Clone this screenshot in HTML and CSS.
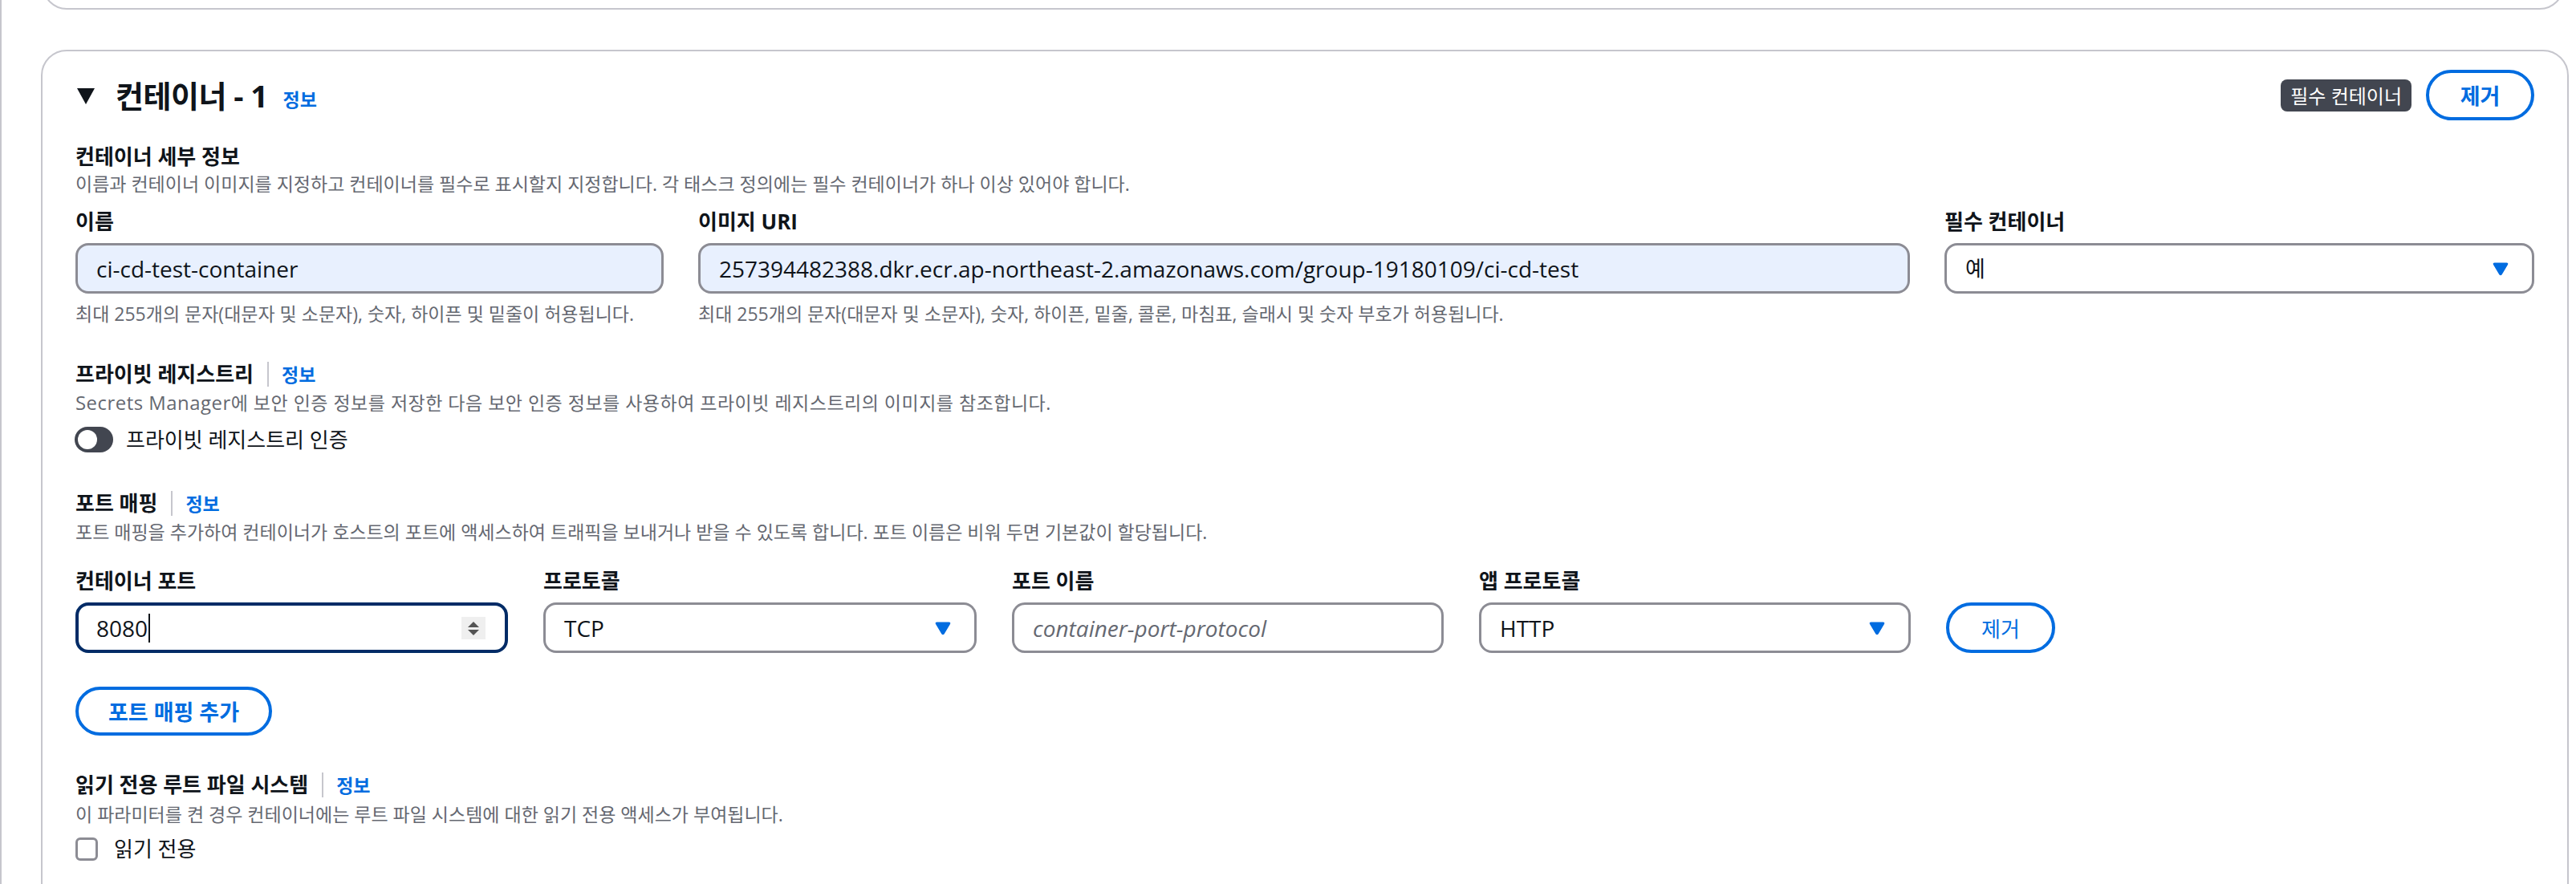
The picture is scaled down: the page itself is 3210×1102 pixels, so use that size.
FILE: index.html
```html
<!DOCTYPE html>
<html lang="ko">
<head>
<meta charset="utf-8">
<title>컨테이너 - 1</title>
<link rel="stylesheet" href="styles.css">
</head>
<body>
<div class="page">
  <div class="prev-card"></div>

  <section class="card">
    <header class="card-header">
      <div class="title-group">
        <span class="caret-down"></span>
        <h2 class="title">컨테이너 - 1</h2>
        <a class="info-link title-info">정보</a>
      </div>
      <div class="header-actions">
        <span class="badge">필수 컨테이너</span>
        <button class="btn btn-header">제거</button>
      </div>
    </header>

    <div class="section section-details">
      <h3 class="section-title">컨테이너 세부 정보</h3>
      <p class="desc">이름과 컨테이너 이미지를 지정하고 컨테이너를 필수로 표시할지 지정합니다. 각 태스크 정의에는 필수 컨테이너가 하나 이상 있어야 합니다.</p>
      <div class="field-row details-grid">
        <div class="field">
          <label class="label">이름</label>
          <div class="input filled"><span class="value">ci-cd-test-container</span></div>
          <p class="hint">최대 255개의 문자(대문자 및 소문자), 숫자, 하이픈 및 밑줄이 허용됩니다.</p>
        </div>
        <div class="field">
          <label class="label">이미지 URI</label>
          <div class="input filled"><span class="value">257394482388.dkr.ecr.ap-northeast-2.amazonaws.com/group-19180109/ci-cd-test</span></div>
          <p class="hint">최대 255개의 문자(대문자 및 소문자), 숫자, 하이픈, 밑줄, 콜론, 마침표, 슬래시 및 숫자 부호가 허용됩니다.</p>
        </div>
        <div class="field">
          <label class="label">필수 컨테이너</label>
          <div class="input select">
            <span class="value ko">예</span>
            <svg class="select-arrow" viewBox="0 0 20 18"><path d="M2.5 1.5h15c1.6 0 2.3 1.2 1.5 2.5l-7.3 12.2c-.8 1.3-2.6 1.3-3.4 0L1 4c-.8-1.3-.1-2.5 1.5-2.5z"/></svg>
          </div>
        </div>
      </div>
    </div>

    <div class="section section-registry">
      <div class="section-head">
        <h3 class="section-title">프라이빗 레지스트리</h3>
        <span class="divider"></span>
        <a class="info-link">정보</a>
      </div>
      <p class="desc desc-tight desc-loose"><span class="lat">Secrets Manager</span>에 보안 인증 정보를 저장한 다음 보안 인증 정보를 사용하여 프라이빗 레지스트리의 이미지를 참조합니다.</p>
      <div class="toggle-row">
        <span class="toggle"><span class="knob"></span></span>
        <span class="control-label">프라이빗 레지스트리 인증</span>
      </div>
    </div>

    <div class="section section-ports">
      <div class="section-head">
        <h3 class="section-title">포트 매핑</h3>
        <span class="divider"></span>
        <a class="info-link">정보</a>
      </div>
      <p class="desc desc-tight">포트 매핑을 추가하여 컨테이너가 호스트의 포트에 액세스하여 트래픽을 보내거나 받을 수 있도록 합니다. 포트 이름은 비워 두면 기본값이 할당됩니다.</p>
      <div class="field-row ports-grid">
        <div class="field">
          <label class="label">컨테이너 포트</label>
          <div class="input focused">
            <span class="value">8080</span><span class="text-caret"></span>
            <span class="spinner">
              <svg viewBox="0 0 30 28"><path d="M15 6l7 7H8z"/><path d="M15 23l7-7H8z"/></svg>
            </span>
          </div>
        </div>
        <div class="field">
          <label class="label">프로토콜</label>
          <div class="input select">
            <span class="value">TCP</span>
            <svg class="select-arrow" viewBox="0 0 20 18"><path d="M2.5 1.5h15c1.6 0 2.3 1.2 1.5 2.5l-7.3 12.2c-.8 1.3-2.6 1.3-3.4 0L1 4c-.8-1.3-.1-2.5 1.5-2.5z"/></svg>
          </div>
        </div>
        <div class="field">
          <label class="label">포트 이름</label>
          <div class="input"><span class="placeholder">container-port-protocol</span></div>
        </div>
        <div class="field">
          <label class="label">앱 프로토콜</label>
          <div class="input select">
            <span class="value">HTTP</span>
            <svg class="select-arrow" viewBox="0 0 20 18"><path d="M2.5 1.5h15c1.6 0 2.3 1.2 1.5 2.5l-7.3 12.2c-.8 1.3-2.6 1.3-3.4 0L1 4c-.8-1.3-.1-2.5 1.5-2.5z"/></svg>
          </div>
        </div>
        <div class="field field-action">
          <button class="btn btn-row">제거</button>
        </div>
      </div>
      <button class="btn btn-add">포트 매핑 추가</button>
    </div>

    <div class="section section-readonly">
      <div class="section-head">
        <h3 class="section-title">읽기 전용 루트 파일 시스템</h3>
        <span class="divider"></span>
        <a class="info-link">정보</a>
      </div>
      <p class="desc desc-readonly">이 파라미터를 켠 경우 컨테이너에는 루트 파일 시스템에 대한 읽기 전용 액세스가 부여됩니다.</p>
      <div class="checkbox-row">
        <span class="checkbox"></span>
        <span class="control-label">읽기 전용</span>
      </div>
    </div>
  </section>
</div>
</body>
</html>
```

FILE: styles.css
```css
* {
  box-sizing: border-box;
}

html, body {
  margin: 0;
  padding: 0;
  background: #ffffff;
  overflow: hidden;
}

body {
  font-family: "Open Sans", "Noto Sans CJK KR", sans-serif;
  color: #0f141a;
}

h2, h3, p {
  margin: 0;
}

.page {
  min-height: 1102px;
  border-left: 2px solid #c6c6cd;
  padding: 0 9px 0 49px;
}

/* bottom edge of the previous container panel */
.prev-card {
  height: 50px;
  margin: -38px 6px 0 2px;
  border: 2px solid #c6c6cd;
  border-radius: 0 0 30px 30px;
}

.card {
  margin-top: 50px;
  border: 2px solid #c6c6cd;
  border-radius: 32px;
  padding: 23px 41px 80px 41px;
}

/* header */
.card-header {
  display: flex;
  align-items: center;
  justify-content: space-between;
  height: 63px;
}

.title-group {
  display: flex;
  align-items: center;
}

.caret-down {
  width: 0;
  height: 0;
  margin-left: 2px;
  margin-right: 26px;
  margin-top: 2px;
  border-left: 11.5px solid transparent;
  border-right: 11.5px solid transparent;
  border-top: 20px solid #0f141a;
}

.title {
  font-size: 38px;
  font-weight: 700;
  letter-spacing: -0.5px;
  line-height: 50px;
}

.info-link {
  color: #006ce0;
  font-size: 23px;
  font-weight: 700;
  line-height: 30px;
  cursor: pointer;
}

.title-info {
  margin-left: 19px;
  margin-top: 10px;
}

.header-actions {
  display: flex;
  align-items: center;
  gap: 18px;
}

.badge {
  display: inline-flex;
  align-items: center;
  height: 40px;
  padding: 0 12px;
  border-radius: 8px;
  background: #424650;
  color: #ffffff;
  font-size: 24px;
  font-weight: 400;
}

.btn {
  font-family: "Open Sans", "Noto Sans CJK KR", sans-serif;
  background: #ffffff;
  color: #006ce0;
  border: 4px solid #006ce0;
  border-radius: 40px;
  font-weight: 700;
  cursor: pointer;
  padding: 0;
}

.btn-header {
  width: 135px;
  height: 63px;
  font-size: 27px;
}

/* sections */
.section-title {
  font-size: 26px;
  font-weight: 700;
  line-height: 34px;
}

.section-details {
  margin-top: 28px;
}

.section-details .desc {
  margin-top: 2px;
}

.desc {
  font-size: 23px;
  line-height: 30px;
  color: #656871;
}

.desc-tight {
  margin-top: 4px;
}

.desc-loose {
  letter-spacing: 0.5px;
}

.desc-readonly {
  margin-top: 5px;
}

.lat {
  font-size: 1.04em;
}

.section-head {
  display: flex;
  align-items: center;
  height: 34px;
}

.divider {
  width: 2px;
  height: 31px;
  background: #c6c6cd;
  margin: 0 16px 0 17px;
}

.section-head .info-link {
  margin-top: 2px;
}

/* form fields */
.field-row {
  display: grid;
  align-items: start;
}

.details-grid {
  margin-top: 15px;
  grid-template-columns: 733px 1510px 735px;
  column-gap: 43px;
}

.ports-grid {
  margin-top: 29px;
  grid-template-columns: 539px 540px 538px 538px 136px;
  column-gap: 44px;
}

.label {
  display: block;
  font-size: 26px;
  font-weight: 700;
  line-height: 34px;
}

.input {
  display: flex;
  align-items: center;
  height: 63px;
  margin-top: 10px;
  border: 3px solid #8c8c94;
  border-radius: 16px;
  padding: 0 23px;
  background: #ffffff;
  font-size: 28px;
  white-space: nowrap;
  overflow: hidden;
}

.input.filled {
  background: #e8f0fe;
}

.input.focused {
  border: 4px solid #002b66;
  padding: 0 24px 0 22px;
}

.value {
  line-height: 40px;
}

.value.ko {
  font-size: 27px;
}

.placeholder {
  color: #656871;
  font-style: italic;
  line-height: 40px;
}

.text-caret {
  width: 2px;
  height: 36px;
  background: #0f141a;
  margin-left: 1px;
}

.spinner {
  margin-left: auto;
  width: 30px;
  height: 28px;
  background: #efefef;
}

.spinner svg {
  display: block;
  width: 30px;
  height: 28px;
  fill: #545454;
}

.select {
  justify-content: space-between;
  padding-right: 29px;
}

.select-arrow {
  width: 20px;
  height: 18px;
  fill: #006ce0;
  flex: none;
}

.hint {
  margin-top: 10px;
  font-size: 23px;
  line-height: 30px;
  color: #656871;
}

.field-action {
  padding-top: 44px;
}

.btn-row {
  width: 136px;
  height: 63px;
  font-size: 26px;
  font-weight: 400;
}

.btn-add {
  display: block;
  margin-top: 42px;
  width: 245px;
  height: 61px;
  font-size: 27px;
}

.section-registry {
  margin-top: 43px;
}

.section-ports {
  margin-top: 45px;
}

.section-readonly {
  margin-top: 44px;
}

/* toggle */
.toggle-row,
.checkbox-row {
  display: flex;
  align-items: center;
  height: 34px;
}

.toggle-row {
  margin-top: 14px;
}

.toggle {
  position: relative;
  width: 48px;
  height: 32px;
  border-radius: 16px;
  background: #424650;
  flex: none;
  margin-left: -1px;
}

.knob {
  position: absolute;
  left: 4px;
  top: 4px;
  width: 24px;
  height: 24px;
  border-radius: 50%;
  background: #ffffff;
}

.control-label {
  font-size: 26px;
  line-height: 34px;
}

.toggle-row .control-label {
  margin-left: 16px;
}

/* checkbox */
.checkbox-row {
  margin-top: 11px;
}

.checkbox {
  width: 28px;
  height: 29px;
  border: 3px solid #8c8c94;
  border-radius: 6px;
  flex: none;
}

.checkbox-row .control-label {
  margin-left: 20px;
}
```
